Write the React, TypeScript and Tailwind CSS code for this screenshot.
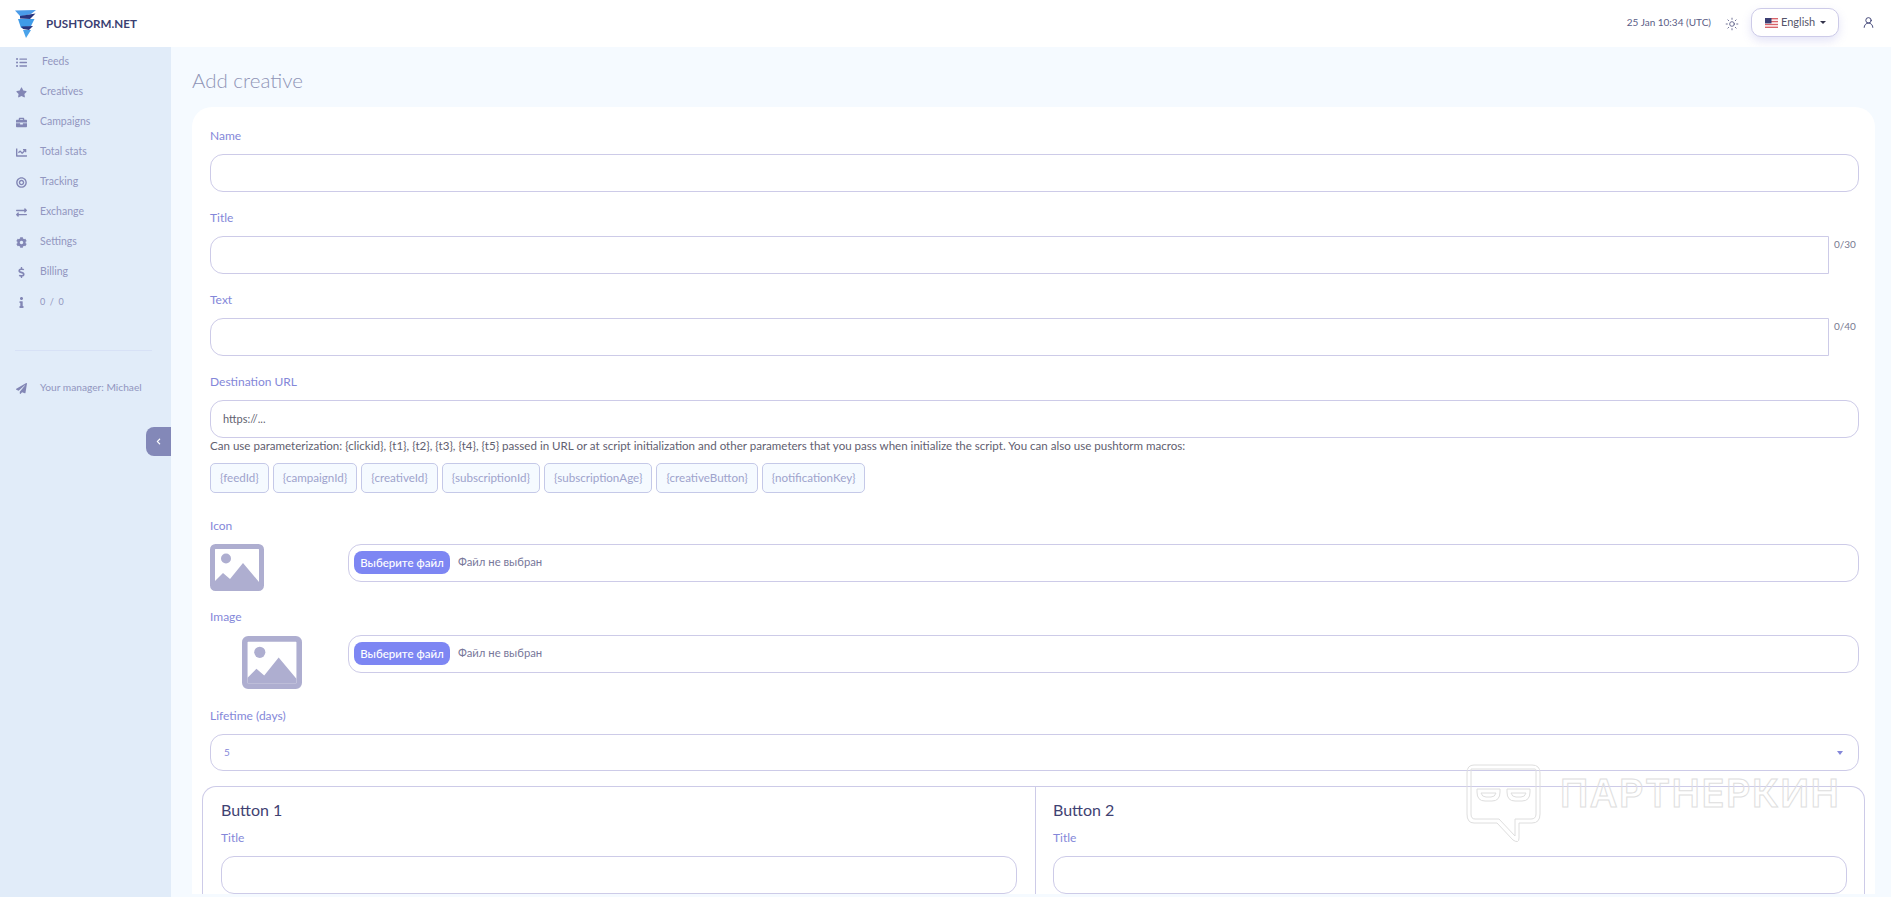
import { type ReactNode } from "react";

import {
  FaListUl,
  FaStar,
  FaBriefcase,
  FaChartLine,
  FaBullseye,
  FaExchangeAlt,
  FaCog,
  FaDollarSign,
  FaInfo,
  FaPaperPlane,
  FaChevronLeft,
} from "react-icons/fa";
import { LuSun, LuUserRound } from "react-icons/lu";

const menu = [
  { icon: FaListUl, label: "Feeds", text: "ml-[15px] text-[10.5px]" },
  { icon: FaStar, label: "Creatives", text: "ml-[13px] text-[10.5px]" },
  { icon: FaBriefcase, label: "Campaigns", text: "ml-[13px] text-[10.5px]" },
  { icon: FaChartLine, label: "Total stats", text: "ml-[13px] text-[10.5px]" },
  { icon: FaBullseye, label: "Tracking", text: "ml-[13px] text-[10.5px]" },
  { icon: FaExchangeAlt, label: "Exchange", text: "ml-[13px] text-[10.5px]" },
  { icon: FaCog, label: "Settings", text: "ml-[13px] text-[10.5px]" },
  { icon: FaDollarSign, label: "Billing", text: "ml-[13px] text-[10.5px]" },
  { icon: FaInfo, label: "0  /  0", text: "ml-[13px] text-[9px]" },
];

const macros = [
  "{feedId}",
  "{campaignId}",
  "{creativeId}",
  "{subscriptionId}",
  "{subscriptionAge}",
  "{creativeButton}",
  "{notificationKey}",
];

function Logo() {
  return (
    <svg viewBox="0 0 22 29" className="h-[29px] w-[22px]" aria-hidden="true">
      <path d="M0 1.5 L21 1 L16 5 L8 7 L5 7 Z" fill="#4a9be8" />
      <path d="M5 7 L20.5 4.5 L15 10 L5 9.5 Z" fill="#27357f" />
      <path d="M3 10 L19.5 10 L16 17 L6 19 Z" fill="#3f9be8" />
      <path d="M6 17.5 L18 17 L14 21 L8 20 Z" fill="#27357f" />
      <path d="M8 21 L16 21 L11 29 Z" fill="#4aa3ea" />
    </svg>
  );
}

function Flag() {
  return (
    <svg viewBox="0 0 13 10" className="h-[10px] w-[13px]" aria-hidden="true">
      <rect width="13" height="10" fill="#fff" />
      <rect width="13" height="1.4" fill="#d9646a" />
      <rect y="2.9" width="13" height="1.4" fill="#d9646a" />
      <rect y="5.8" width="13" height="1.4" fill="#d9646a" />
      <rect y="8.6" width="13" height="1.4" fill="#d9646a" />
      <rect width="6.5" height="5.4" fill="#3c3f73" />
    </svg>
  );
}

function Placeholder({ className }: { className: string }) {
  return (
    <svg
      viewBox="0 0 54 47"
      preserveAspectRatio="none"
      className={className}
      aria-hidden="true"
    >
      <rect x="2.5" y="2.5" width="49" height="42" rx="3" fill="none" stroke="#aeaed0" strokeWidth="5" />
      <circle cx="16" cy="14.5" r="5" fill="#aeaed0" />
      <path d="M5 40 L5 37 L13 29 L20 35 L33 19 L49 38 L49 42 L5 42 Z" fill="#aeaed0" />
    </svg>
  );
}

function Field({ label, children }: { label: string; children: ReactNode }) {
  return (
    <div className="mb-4">
      <div className="mb-2 h-5 text-xs leading-5 text-[#8487d9]">{label}</div>
      {children}
    </div>
  );
}

function TextInput({ value }: { value?: string }) {
  return (
    <div className="flex h-[38px] items-center rounded-[13px] border border-[#cdcbe8] bg-white px-[12px] text-[11px] text-[#5f5f70]">
      {value}
    </div>
  );
}

function CountedInput({ count }: { count: string }) {
  return (
    <div className="flex items-start">
      <div className="h-[38px] flex-1 rounded-l-[13px] border border-[#cdcbe8] bg-white" />
      <div className="w-[30px] pt-[1px] pl-[5px] text-[10px] leading-[14px] text-[#777a90]">
        {count}
      </div>
    </div>
  );
}

function FileInput() {
  return (
    <div className="flex h-[38px] flex-1 items-center rounded-[13px] border border-[#cdcbe8] bg-white pb-px pl-[5px]">
      <div className="flex h-[23px] w-[96px] items-center justify-center rounded-[8px] bg-[#7d86f3] text-[11.5px] font-medium text-white">
        Выберите файл
      </div>
      <span className="ml-2 text-[11.3px] text-[#77779a]">Файл не выбран</span>
    </div>
  );
}

function Watermark() {
  return (
    <div className="pointer-events-none absolute top-[764px] left-[1466px] flex items-start">
      <svg width="76" height="80" viewBox="0 0 76 80" fill="none" stroke="#dedede" aria-hidden="true">
        <path d="M8 1 H66 Q74 1 74 9 V50 Q74 59 66 59 H53 V74 Q53 80 47 76 L31 59 H8 Q1 59 1 50 V9 Q1 1 8 1 Z" />
        <path d="M5 5 H69 Q70 5 70 7 V50 Q70 55 65 55 H49 V72 L33 55 H9 Q5 55 5 50 Z" />
        <path d="M11 25 H34 V28 Q34 37 26 37 H19 Q11 37 11 28 Z" />
        <path d="M41 25 H64 V28 Q64 37 56 37 H49 Q41 37 41 28 Z" />
        <path d="M15 29 H30 Q29 33 25 33 H20 Q16 33 15 29 Z" />
        <path d="M45 29 H60 Q59 33 55 33 H50 Q46 33 45 29 Z" />
      </svg>
      <span className="mt-[6px] ml-[18px] font-['Inter',sans-serif] text-[38px] leading-[46px] font-semibold tracking-[1.5px] text-transparent [-webkit-text-stroke:1px_#dedede]">
        ПАРТНЕРКИН
      </span>
    </div>
  );
}

export default function App() {
  return (
    <div className="relative flex h-screen flex-col overflow-hidden bg-white font-['Lato',sans-serif]">
      <header className="flex h-[47px] shrink-0 items-center bg-white pr-[16px] pl-[15px]">
        <Logo />
        <span className="ml-[9px] text-[11.6px] font-bold text-[#3b3f72]">
          PUSHTORM.NET
        </span>
        <span className="ml-auto pb-[2px] text-[10px] text-[#5a5d86]">
          25 Jan 10:34 (UTC)
        </span>
        <LuSun className="ml-[14px] size-[14px] text-[#5a5d86]" strokeWidth={1.5} aria-hidden="true" />
        <div className="mb-[2px] ml-[12px] flex h-[29px] w-[88px] items-center rounded-[10px] border border-[#cdcbe8] bg-white pl-[13px] text-[11px] text-[#55556a] shadow-[0_4px_10px_rgba(130,130,220,0.22)]">
          <Flag />
          <span className="ml-[3px]">English</span>
          <span className="ml-[5px] border-x-[3px] border-t-[3px] border-x-transparent border-t-[#33334a]" />
        </div>
        <LuUserRound className="mb-[2px] ml-[23px] size-[13px] text-[#3b3f72]" strokeWidth={1.75} aria-hidden="true" />
      </header>

      <div className="flex min-h-0 flex-1">
        <aside className="relative w-[171px] shrink-0 bg-[#e1ecf9] pl-[16px] text-[#9296c0]">
          {menu.map((item) => (
            <div key={item.label} className="flex h-[30px] items-center">
              <item.icon className="size-[11px] text-[#8286b5]" aria-hidden="true" />
              <span className={`${item.text} whitespace-pre`}>{item.label}</span>
            </div>
          ))}
          <div className="mt-[33px] mr-[19px] -ml-px border-t border-[#d7e1f6]" />
          <div className="mt-[22px] flex h-[30px] items-center">
            <FaPaperPlane className="size-[11px] text-[#8286b5]" aria-hidden="true" />
            <span className="ml-[13px] text-[10.2px]">Your manager: Michael</span>
          </div>
          <div className="absolute top-[380px] right-0 flex h-[29px] w-[25px] items-center justify-center rounded-l-[8px] bg-[#8388b8] text-white">
            <FaChevronLeft className="size-[7px]" aria-hidden="true" />
          </div>
        </aside>

        <main className="min-w-0 flex-1 bg-[#f5faff] pr-[16px] pl-[22px]">
          <h1 className="-ml-px flex h-[60px] items-center pt-[7px] text-[20.5px] font-light text-[#8f94b6]">
            Add creative
          </h1>
          <div className="-ml-px rounded-t-[20px] bg-white px-[16px] pt-[19px] pl-[18px]">
            <Field label="Name">
              <TextInput />
            </Field>
            <Field label="Title">
              <CountedInput count="0/30" />
            </Field>
            <Field label="Text">
              <CountedInput count="0/40" />
            </Field>
            <div className="mb-[23px]">
              <div className="mb-2 h-5 text-xs leading-5 text-[#8487d9]">Destination URL</div>
              <TextInput value="https://..." />
              <p className="h-[15px] text-[11.57px] leading-[15px] text-[#5f6070]">
                Can use parameterization: {"{clickid}, {t1}, {t2}, {t3}, {t4}, {t5}"} passed in URL or at script initialization and other parameters that you pass when initialize the script. You can also use pushtorm macros:
              </p>
              <div className="mt-[10px] flex gap-1">
                {macros.map((macro) => (
                  <span
                    key={macro}
                    className="flex h-[30px] items-center rounded-[5px] border border-[#c5c9e8] bg-[#f5faff] px-[9px] text-[11.6px] text-[#9ea3cc]"
                  >
                    {macro}
                  </span>
                ))}
              </div>
            </div>
            <div className="h-[91px]">
              <div className="mb-2 h-5 text-xs leading-5 text-[#8487d9]">Icon</div>
              <div className="flex items-start">
                <div className="w-[138px]">
                  <Placeholder className="h-[47px] w-[54px]" />
                </div>
                <FileInput />
              </div>
            </div>
            <div className="h-[99px]">
              <div className="mb-2 h-5 text-xs leading-5 text-[#8487d9]">Image</div>
              <div className="flex items-start">
                <div className="w-[138px] pt-px pl-[32px]">
                  <Placeholder className="h-[53px] w-[60px]" />
                </div>
                <FileInput />
              </div>
            </div>
            <div className="mb-[15px]">
              <div className="mb-2 h-5 text-xs leading-5 text-[#8487d9]">Lifetime (days)</div>
              <div className="flex h-[37px] items-center justify-between rounded-[13px] border border-[#cdcbe8] bg-white pr-[15px] pl-[13px] text-[10px] text-[#8487d9]">
                5
                <span className="border-x-[3px] border-t-[4px] border-x-transparent border-t-[#8487d9]" />
              </div>
            </div>
            <div className="-mr-[6px] -ml-[8px] flex rounded-t-[14px] border border-b-0 border-[#cdcbe8]">
              {["Button 1", "Button 2"].map((name, index) => (
                <div
                  key={name}
                  className={
                    index === 0
                      ? "w-[833px] border-r border-[#cdcbe8] pt-[13px] pr-[18px] pl-[18px]"
                      : "flex-1 pt-[13px] pr-[17px] pl-[17px]"
                  }
                >
                  <div className="h-[20px] text-[16px] leading-[20px] text-[#3f4272]">{name}</div>
                  <div className="mt-[8px] mb-2 h-5 text-xs leading-5 text-[#8487d9]">Title</div>
                  <TextInput />
                </div>
              ))}
            </div>
          </div>
        </main>
      </div>
      <Watermark />
    </div>
  );
}
